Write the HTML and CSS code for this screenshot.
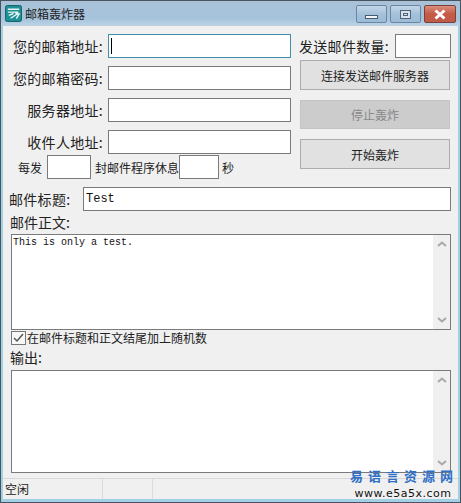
FILE: index.html
```html
<!DOCTYPE html>
<html lang="zh-CN">
<head>
    <meta charset="UTF-8">
    <title>邮箱轰炸器</title>
    <link rel="stylesheet" href="styles.css">
</head>
<body>
    <div class="window">
        <div class="titlebar">
            <svg class="app-icon" width="17" height="17" viewBox="0 0 18 18">
                <rect x="0.5" y="0.5" width="17" height="17" rx="2" fill="#1f8f96" stroke="#0f5f68"/>
                <path d="M3 4.5H15M3 7.5H14L11 9M4 11L9 9M6 14L13 9.5H15L12 14.5" fill="none" stroke="#e6f6f4" stroke-width="1.5"/>
            </svg>
            <span class="title-text">邮箱轰炸器</span>
            <div class="caption-buttons">
                <div class="cap-btn cap-min"><span class="min-glyph"></span></div>
                <div class="cap-btn cap-max"><span class="max-glyph"></span></div>
                <div class="cap-btn cap-close">
                    <svg width="14" height="11" viewBox="0 0 14 11"><path d="M2.5 1.5L11.5 9.5M11.5 1.5L2.5 9.5" stroke="#fff" stroke-width="3"/></svg>
                </div>
            </div>
        </div>

        <div class="client">
            <div class="top-section">
                <div class="left-col">
                    <div class="field-row">
                        <label class="field-label">您的邮箱地址:</label>
                        <div class="input input-wide input-focus"><span class="caret"></span></div>
                    </div>
                    <div class="field-row">
                        <label class="field-label">您的邮箱密码:</label>
                        <div class="input input-wide"></div>
                    </div>
                    <div class="field-row">
                        <label class="field-label">服务器地址:</label>
                        <div class="input input-wide"></div>
                    </div>
                    <div class="field-row">
                        <label class="field-label">收件人地址:</label>
                        <div class="input input-wide"></div>
                    </div>
                    <div class="interval-row">
                        <span class="small-label every">每发</span>
                        <div class="input input-count"></div>
                        <span class="small-label rest">封邮件程序休息</span>
                        <div class="input input-secs"></div>
                        <span class="small-label secs">秒</span>
                    </div>
                </div>
                <div class="right-col">
                    <div class="count-row">
                        <label class="field-label">发送邮件数量:</label>
                        <div class="input input-num"></div>
                    </div>
                    <div class="btn btn-connect">连接发送邮件服务器</div>
                    <div class="btn btn-disabled">停止轰炸</div>
                    <div class="btn btn-start">开始轰炸</div>
                </div>
            </div>

            <div class="subject-row">
                <label class="field-label subject-label">邮件标题:</label>
                <div class="input input-subject">Test</div>
            </div>

            <div class="block-label">邮件正文:</div>
            <div class="textbox textbox-body">
                <div class="textbox-text">This is only a test.</div>
                <div class="scrollbar">
                    <svg width="10" height="6" viewBox="0 0 10 6"><path d="M1 5L5 1.5L9 5" fill="none" stroke="#a8a8a8" stroke-width="2"/></svg>
                    <svg width="10" height="6" viewBox="0 0 10 6"><path d="M1 1L5 4.5L9 1" fill="none" stroke="#a8a8a8" stroke-width="2"/></svg>
                </div>
            </div>

            <div class="check-row">
                <svg class="check" width="15" height="14" viewBox="0 0 15 14">
                    <rect x="0.5" y="0.5" width="14" height="13" fill="#f8f8f8" stroke="#777"/>
                    <path d="M3 7L6 10L12 3" fill="none" stroke="#555" stroke-width="1.5"/>
                </svg>
                <span class="check-text">在邮件标题和正文结尾加上随机数</span>
            </div>

            <div class="block-label output-label">输出:</div>
            <div class="textbox textbox-output">
                <div class="textbox-text"></div>
                <div class="scrollbar">
                    <svg width="10" height="6" viewBox="0 0 10 6"><path d="M1 5L5 1.5L9 5" fill="none" stroke="#a8a8a8" stroke-width="2"/></svg>
                    <svg width="10" height="6" viewBox="0 0 10 6"><path d="M1 1L5 4.5L9 1" fill="none" stroke="#a8a8a8" stroke-width="2"/></svg>
                </div>
            </div>
        </div>

        <div class="statusbar">
            <div class="status-cell status-first">空闲</div>
            <div class="status-cell status-second"></div>
            <div class="status-cell"></div>
        </div>

        <div class="watermark">
            <div class="wm-title">易语言资源网</div>
            <div class="wm-url">www.e5a5x.com</div>
        </div>
    </div>
</body>
</html>
```

FILE: styles.css
```css
html, body {
    margin: 0;
    padding: 0;
}
body {
    width: 461px;
    height: 503px;
    overflow: hidden;
    font-family: "Noto Sans CJK SC", "Liberation Sans", sans-serif;
    color: #222;
}
.window {
    position: relative;
    box-sizing: border-box;
    width: 461px;
    height: 503px;
    display: flex;
    flex-direction: column;
    border: 1px solid #48545e;
    padding: 0 2px 3px 2px;
    background-color: #a4d0e6;
}
.titlebar {
    height: 25px;
    margin: 0 -2px;
    padding-left: 4px;
    display: flex;
    align-items: center;
    flex-shrink: 0;
    background: linear-gradient(to bottom, #a9c2d8 0%, #a6c3dc 70%, #bcd3e6 100%);
    box-sizing: border-box;
}
.app-icon {
    flex-shrink: 0;
}
.title-text {
    margin-left: 3px;
    font-size: 12px;
    color: #222;
}
.caption-buttons {
    margin-left: auto;
    margin-right: 4px;
    margin-top: 4px;
    align-self: flex-start;
    display: flex;
    gap: 3px;
}
.cap-btn {
    height: 18px;
    box-sizing: border-box;
    border: 1px solid #6b86a2;
    border-radius: 2px;
    display: flex;
    align-items: center;
    justify-content: center;
}
.cap-min, .cap-max {
    width: 31px;
    background: linear-gradient(to bottom, #c3d6e8, #a5c1da 50%, #9cbbd6);
}
.cap-close {
    width: 32px;
    background: linear-gradient(to bottom, #d98f7e, #c55a44 50%, #bf5b4a);
    border-color: #7c4038;
}
.min-glyph {
    width: 13px;
    height: 4px;
    margin-top: 5px;
    background-color: #f2f6fa;
    border: 1px solid #44586e;
    box-sizing: border-box;
}
.max-glyph {
    width: 11px;
    height: 9px;
    box-sizing: border-box;
    border: 1px solid #4e6378;
    background-color: #d6e2ee;
    box-shadow: inset 0 0 0 2px #d6e2ee, inset 0 0 0 3px #4e6378;
}
.client {
    flex: 1;
    padding: 8px 5px 0 5px;
    box-sizing: border-box;
    background-color: #f0f0f0;
}
.top-section {
    display: flex;
    height: 145px;
}
.left-col {
    width: 283px;
    display: flex;
    flex-direction: column;
    gap: 8px;
}
.field-row {
    display: flex;
    justify-content: flex-end;
    align-items: center;
    height: 24px;
}
.field-label {
    font-size: 14px;
    white-space: nowrap;
    letter-spacing: 0.3px;
}
.field-row .field-label {
    margin-right: 5px;
}
.input {
    box-sizing: border-box;
    height: 24px;
    background-color: #fff;
    border: 1px solid #7a7a7a;
}
.input-wide {
    width: 183px;
    flex-shrink: 0;
}
.input-focus {
    border-color: #3f8fa8;
    display: flex;
    align-items: center;
    padding-left: 2px;
}
.caret {
    width: 1px;
    height: 16px;
    background-color: #000;
}
.interval-row {
    display: flex;
    align-items: center;
    height: 24px;
    margin-top: -7px;
}
.small-label {
    font-size: 12px;
    white-space: nowrap;
}
.every {
    margin-left: 10px;
    width: 29px;
}
.input-count {
    width: 44px;
}
.rest {
    margin-left: 4px;
    width: 84px;
}
.input-secs {
    width: 40px;
}
.secs {
    margin-left: 3px;
}
.right-col {
    margin-left: 8px;
    width: 152px;
    display: flex;
    flex-direction: column;
}
.count-row {
    display: flex;
    justify-content: space-between;
    align-items: center;
    height: 24px;
}
.input-num {
    width: 56px;
}
.btn {
    box-sizing: border-box;
    width: 150px;
    margin-left: 1px;
    display: flex;
    align-items: center;
    justify-content: center;
    font-size: 12px;
    background-color: #e1e1e1;
    border: 1px solid #adadad;
}
.btn-connect {
    margin-top: 2px;
    height: 30px;
}
.btn-disabled {
    margin-top: 10px;
    height: 29px;
    background-color: #cccccc;
    border-color: #c4c4c4;
    color: #888;
}
.btn-start {
    margin-top: 10px;
    height: 30px;
}
.subject-row {
    display: flex;
    align-items: center;
    height: 24px;
    margin-left: 1px;
    margin-top: 8px;
}
.subject-label {
    width: 74px;
}
.input-subject {
    width: 368px;
    padding-left: 2px;
    font-family: "Liberation Mono", monospace;
    font-size: 12px;
    line-height: 23px;
    color: #111;
}
.block-label {
    font-size: 14px;
    height: 23px;
    line-height: 22px;
    margin-left: 2px;
}
.textbox {
    box-sizing: border-box;
    width: 440px;
    margin-left: 3px;
    background-color: #fff;
    border: 1px solid #7a7a7a;
    display: flex;
}
.textbox-text {
    flex: 1;
    padding: 1px 1px;
    font-family: "Liberation Mono", monospace;
    font-size: 10px;
    line-height: 13px;
    color: #111;
}
.scrollbar {
    width: 17px;
    background-color: #f0f0f0;
    display: flex;
    flex-direction: column;
    justify-content: space-between;
    align-items: center;
    padding: 6px 0;
}
.textbox-body {
    height: 96px;
}
.textbox-output {
    height: 103px;
}
.check-row {
    display: flex;
    align-items: center;
    height: 16px;
    margin-left: 3px;
}
.check-text {
    margin-left: 1px;
    margin-bottom: 2px;
    font-size: 12px;
}
.output-label {
    height: 24px;
    line-height: 22px;
}
.statusbar {
    height: 21px;
    display: flex;
    flex-shrink: 0;
    border-top: 1px solid #d8d8d8;
    box-sizing: border-box;
    background-color: #f0f0f0;
}
.status-cell {
    box-sizing: border-box;
    font-size: 12px;
    line-height: 19px;
    color: #222;
    padding-left: 2px;
}
.status-first {
    width: 100px;
    border-right: 1px solid #dcdcdc;
}
.status-second {
    width: 50px;
    border-right: 1px solid #dcdcdc;
}
.watermark {
    position: absolute;
    right: 4px;
    bottom: 1px;
    width: 106px;
    text-align: center;
}
.wm-title {
    font-weight: 700;
    font-size: 13px;
    letter-spacing: 5px;
    line-height: 19px;
    margin-bottom: 2px;
    white-space: nowrap;
    color: #2f6fc4;
}
.wm-url {
    font-family: "DejaVu Sans", sans-serif;
    font-size: 11px;
    letter-spacing: 0.5px;
    line-height: 14px;
    color: #111;
    white-space: nowrap;
}
```
